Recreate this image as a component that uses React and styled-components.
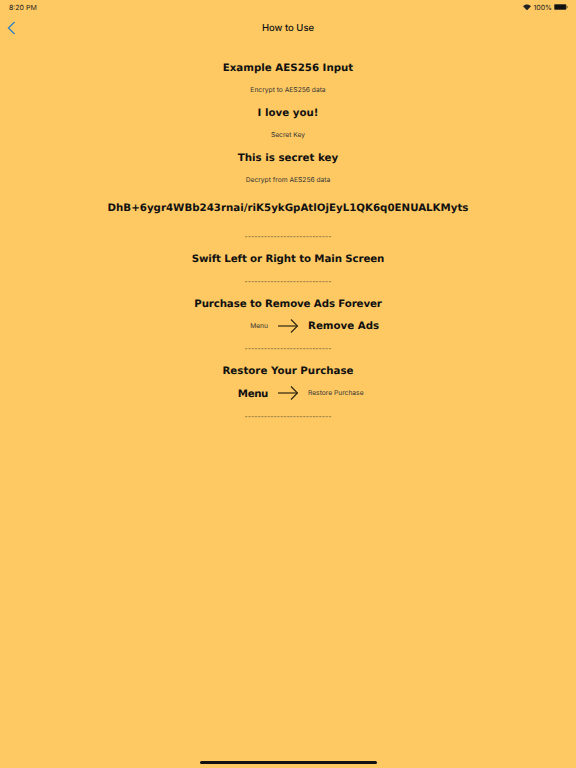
import React from 'react'
import styled, { createGlobalStyle } from 'styled-components'

const GlobalStyle = createGlobalStyle`
    html, body {
        margin: 0;
        padding: 0;
        background: #FEC963;
    }
`

const Screen = styled.div`
    position: relative;
    width: 576px;
    height: 768px;
    overflow: hidden;
    background: #FEC963;
    color: #111;
    font-family: Inter, "Liberation Sans", sans-serif;
    text-rendering: geometricPrecision;
`

const StatusBar = styled.div`
    height: 14px;
    padding: 0 8px 0 9px;
    display: flex;
    align-items: center;
    justify-content: space-between;
    font-size: 7px;
    color: #222;
`

const StatusRight = styled.div`
    display: flex;
    align-items: center;
    gap: 2px;
`

const NavBar = styled.div`
    height: 28px;
    display: grid;
    grid-template-columns: 1fr auto 1fr;
    align-items: center;
`

const BackButton = styled.div`
    padding-left: 7px;
    display: flex;
    align-items: center;
`

const NavTitle = styled.div`
    font-size: 9.5px;
    font-weight: 500;
`

const Content = styled.div`
    padding-top: 14px;
    display: flex;
    flex-direction: column;
    align-items: stretch;
`

const Row = styled.div`
    height: ${(props) => props.height || 22.5}px;
    display: flex;
    align-items: center;
    justify-content: center;
    white-space: nowrap;
`

const Big = styled.span`
    font-family: "DejaVu Sans", Verdana, sans-serif;
    font-weight: 700;
    font-size: 10.25px;
    line-height: 1;
    padding-top: 1px;
    letter-spacing: ${(props) => props.$spacing || 0}px;
    color: #111;
`

const Small = styled.span`
    font-size: 6.7px;
    line-height: 1;
    padding-top: 1px;
    color: #333;
`

const Dashes = styled.span`
    font-size: 7px;
    padding-top: 1px;
    color: #4a4030;
`

const ArrowRow = styled.div`
    height: 22.5px;
    display: grid;
    grid-template-columns: 1fr 20px 1fr;
    gap: 10px;
    align-items: center;
    white-space: nowrap;
`

const LeftCell = styled.div`
    display: flex;
    align-items: center;
    justify-content: flex-end;
`

const RightCell = styled.div`
    display: flex;
    align-items: center;
    justify-content: flex-start;
`

const ArrowBox = styled.div`
    display: flex;
    align-items: center;
`

const HomeBar = styled.div`
    position: absolute;
    left: 200px;
    bottom: 4px;
    width: 177px;
    height: 3px;
    border-radius: 2px;
    background: #111;
`

const Arrow = () => (
    <ArrowBox>
        <svg width="20" height="14" viewBox="0 0 20 14" fill="none" stroke="#2e2610" strokeWidth="1.2">
            <path d="M0 7H19.5" />
            <path d="M13 0.5L19.5 7L13 13.5" />
        </svg>
    </ArrowBox>
)

const Wifi = () => (
    <svg width="8" height="6.5" viewBox="0 0 9 7" fill="#222">
        <path d="M4.5 7L0 2.3C2.5-.4 6.5-.4 9 2.3Z" />
    </svg>
)

const Battery = () => (
    <svg width="14" height="6" viewBox="0 0 14 6">
        <rect x="0.25" y="0.25" width="12" height="5.5" rx="1.3" fill="#111" stroke="#6b5a30" strokeWidth="0.5" />
        <rect x="12.8" y="2" width="1" height="2" fill="#8a7440" />
    </svg>
)

const DASHES = '---------------------------'

function App() {
    return (
        <Screen>
            <GlobalStyle />
            <StatusBar>
                <span>8:20 PM</span>
                <StatusRight>
                    <Wifi />
                    <span>100%</span>
                    <Battery />
                </StatusRight>
            </StatusBar>
            <NavBar>
                <BackButton>
                    <svg width="9" height="14" viewBox="0 0 9 14" fill="none" stroke="#2E82C0" strokeWidth="1.3">
                        <path d="M7.5 1L1.5 7L7.5 13" />
                    </svg>
                </BackButton>
                <NavTitle>How to Use</NavTitle>
                <div />
            </NavBar>
            <Content>
                <Row><Big>Example AES256 Input</Big></Row>
                <Row><Small>Encrypt to AES256 data</Small></Row>
                <Row><Big>I love you!</Big></Row>
                <Row><Small>Secret Key</Small></Row>
                <Row><Big>This is secret key</Big></Row>
                <Row><Small>Decrypt from AES256 data</Small></Row>
                <Row height={33.5}><Big>DhB+6ygr4WBb243rnai/riK5ykGpAtlOjEyL1QK6q0ENUALKMyts</Big></Row>
                <Row><Dashes>{DASHES}</Dashes></Row>
                <Row><Big $spacing={-0.12}>Swift Left or Right to Main Screen</Big></Row>
                <Row><Dashes>{DASHES}</Dashes></Row>
                <Row><Big $spacing={-0.13}>Purchase to Remove Ads Forever</Big></Row>
                <ArrowRow>
                    <LeftCell><Small>Menu</Small></LeftCell>
                    <Arrow />
                    <RightCell><Big>Remove Ads</Big></RightCell>
                </ArrowRow>
                <Row><Dashes>{DASHES}</Dashes></Row>
                <Row><Big>Restore Your Purchase</Big></Row>
                <ArrowRow>
                    <LeftCell><Big $spacing={-0.4}>Menu</Big></LeftCell>
                    <Arrow />
                    <RightCell><Small>Restore Purchase</Small></RightCell>
                </ArrowRow>
                <Row><Dashes>{DASHES}</Dashes></Row>
            </Content>
            <HomeBar />
        </Screen>
    )
}

export default App
